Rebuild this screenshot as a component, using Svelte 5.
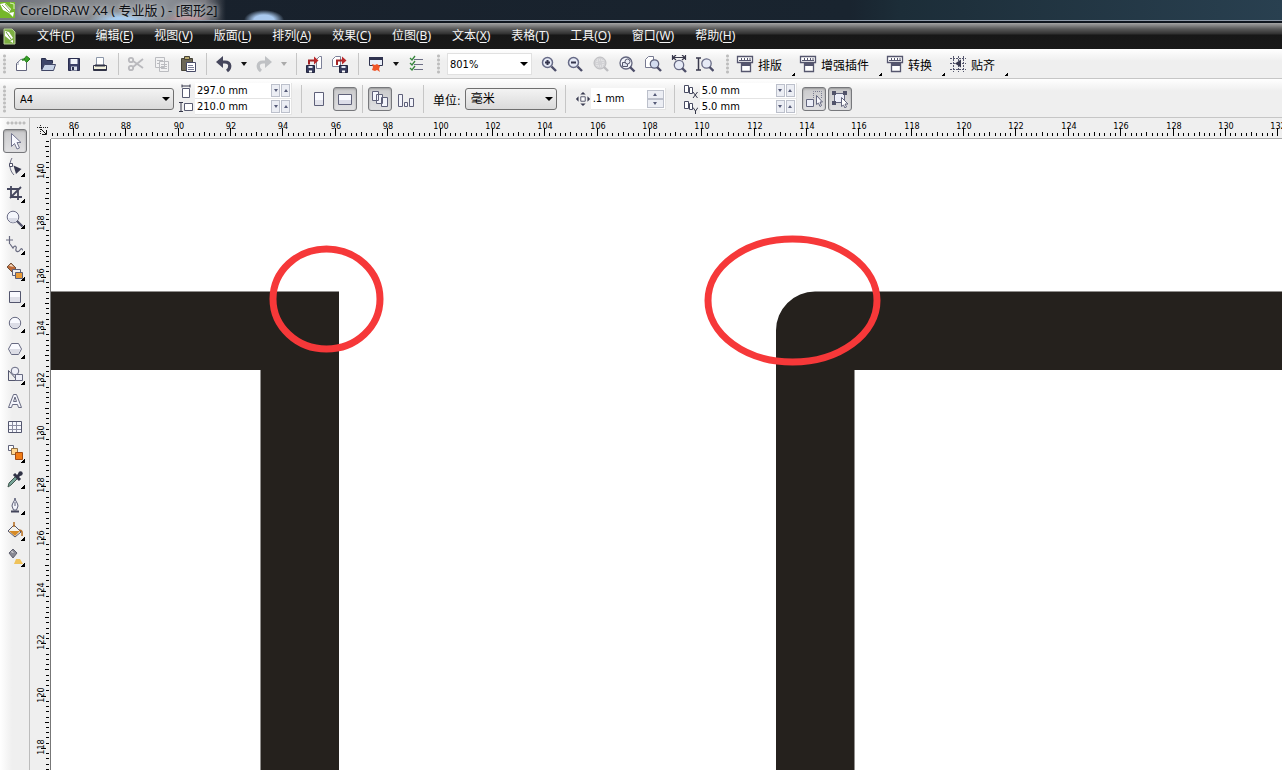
<script>
  let viewWidth = $state(1282);
  let viewHeight = $state(770);

  const menus = [
    ['文件', 'F'], ['编辑', 'E'], ['视图', 'V'], ['版面', 'L'], ['排列', 'A'], ['效果', 'C'],
    ['位图', 'B'], ['文本', 'X'], ['表格', 'T'], ['工具', 'O'], ['窗口', 'W'], ['帮助', 'H']
  ];

  const lens = '<circle cx="7.500" cy="7.500" r="5" fill="#e6eaf6" stroke="#666a86" stroke-width="1.500"/><path d="M11.500 11.500l4.500 4.500" stroke="#4d4e69" stroke-width="2.400"/>';
  const layoutIcon = '<path d="M1.500 1.500h15v6h-15z" fill="#fff" stroke="#55566e" stroke-width="1.300"/><path d="M5.500 3v3M8.500 3v3M11.500 3v3M14 3v3M3 5.500h12" stroke="#55566e"/><path d="M5.500 8.500h9v8h-9z" fill="#fff" stroke="#55566e" stroke-width="1.300"/><path d="M5 10h10" stroke="#55566e" stroke-width="2"/>';
  const disk = '<path d="M1.500 10.500h8v7h-8z" fill="#353a5c" stroke="#23263f"/><path d="M3.500 11h4v2h-4z" fill="#dfe4f2"/><path d="M4 15.500h3v2h-3z" fill="#fff"/>';

  const icons = {
    new: '<path d="M3.500 8.500l4-4h6v11h-10z" fill="#fff" stroke="#62647d"/><path d="M5 10c0-4 2-6 6-6" fill="none" stroke="#9aa2b4"/><path d="M9 5l4-1" stroke="#3a8f2c" stroke-width="2"/><path d="M13.500 1l3.500 3-3.500 3.500L11 4z" fill="#35a126" stroke="#277d1c"/>',
    open: '<path d="M2.500 14.500v-11h4l1 2h6v3" fill="#3d4569" stroke="#292e4c"/><path d="M2.500 15.500l3-6h11l-2 6z" fill="#c7d2e6" stroke="#414766"/>',
    save: '<path d="M3.500 3.500h11v12h-11z" fill="#3c4168" stroke="#2a2e4f"/><path d="M5.500 4h7v5h-7z" fill="#f2f5fb"/><path d="M6 11.500h6v4H6z" fill="#d8deea"/><path d="M7 12h2v3H7z" fill="#2a2e4f"/>',
    print: '<path d="M5.500 2.500h7v8h-7z" fill="#fff" stroke="#8c97a9"/><path d="M2.500 10.500h13v5h-13z" fill="#f2f1dc" stroke="#303247"/><path d="M4 10.500h10M3 15h12" stroke="#303247" stroke-width="2"/>',
    cut: '<g fill="none" stroke="#b9b9bd" stroke-width="1.800"><circle cx="4" cy="5" r="2.200"/><circle cx="4" cy="13" r="2.200"/><path d="M6 6l10 7M6 12l10-8"/></g>',
    copy: '<path d="M2.500 2.500h9v10h-9zM6.500 6.500h9v10h-9z" fill="#f2f2f3" stroke="#bbbcc0"/><path d="M4 5.500h6M4 8.500h2M8 9.500h6M8 11.500h6M8 13.500h6" stroke="#bbbcc0"/>',
    paste: '<path d="M2.500 3.500h11v12h-11z" fill="#6c6756" stroke="#464338"/><path d="M5.500 1.500h5v3h-5z" fill="#b6a76d" stroke="#464338"/><path d="M7.500 7.500h9v9h-9z" fill="#fff" stroke="#474a67"/><path d="M9 10.500h5M9 12.500h6M9 14.500h6" stroke="#7a7d98"/>',
    undo: '<path d="M6 7h4c6 0 6 6 2 9" fill="none" stroke="#45465c" stroke-width="3.200"/><path d="M1 7l7-6v12z" fill="#45465c"/>',
    redo: '<path d="M12 7H8c-6 0-6 6-2 9" fill="none" stroke="#bfc1c4" stroke-width="3.200"/><path d="M17 7l-7-6v12z" fill="#bfc1c4"/>',
    import: '<path d="M11.500 13.500v-9l3-3h2v12h-5z" fill="#fff" stroke="#7d8199"/><path d="M4 9.500V5.500h6" fill="none" stroke="#a42426" stroke-width="2"/><path d="M9 1.500l4.500 4-4.500 4z" fill="#b9292b"/>' + disk,
    export: '<path d="M1.500 11.500v-7l3-3h5v10z" fill="#fff" stroke="#7d8199"/><path d="M6 10V5.500h5" fill="none" stroke="#a42426" stroke-width="2"/><path d="M11 1.500l4.500 4-4.500 4z" fill="#b9292b"/><g transform="translate(7 0)">' + disk + '</g>',
    launch: '<path d="M2.500 2.500h13v8h-13z" fill="#e8edf7" stroke="#30334f"/><path d="M2 3.500h14" stroke="#30334f" stroke-width="3"/><path d="M5 9l3 1 2-1 3 2-1 3 1 3-3-2-2 1-3-1 1-3z" fill="#ef5529"/>',
    options: '<path d="M3 3l2 2 3-4M3 8l2 2 3-4M3 13l2 2 3-4" fill="none" stroke="#35863b" stroke-width="1.300"/><path d="M7 4.500h9M7 9.500h9M7 14.500h9" stroke="#6b6d84"/>',
    zoomin: lens + '<path d="M5 7.500h5M7.500 5v5" stroke="#34354d" stroke-width="2"/>',
    zoomout: lens + '<path d="M5 7.500h5" stroke="#34354d" stroke-width="2"/>',
    zoomsel: '<circle cx="8" cy="8" r="6" fill="#d2d2d5" stroke="#bdbdc0"/><path d="M12 12l4 4" stroke="#bdbdc0" stroke-width="2.400"/><path d="M5 5h6v6H5z" fill="none" stroke="#eee" stroke-dasharray="1 1"/>',
    zoomall: '<circle cx="8" cy="8" r="6" fill="#f4f6fc" stroke="#62657e" stroke-width="1.300"/><path d="M12 12l4.500 4.500" stroke="#4d4e69" stroke-width="2.400"/><path d="M4.500 7.500h5v4h-5z" fill="#dfe4f0" stroke="#56586f"/><circle cx="9.500" cy="6.500" r="2.500" fill="#e9ecf5" stroke="#56586f"/>',
    zoompage: '<path d="M1.500 12.500v-8l3-3h5v11z" fill="#fff" stroke="#777a91"/><circle cx="10.500" cy="9" r="4.200" fill="#d3dcef" stroke="#5e617b" stroke-width="1.300"/><path d="M13 12l4 4" stroke="#4d4e69" stroke-width="2.400"/>',
    zoomwidth: '<path d="M2.500 0v5M15.500 0v5M3 2.500h12M6 0L3 2.500 6 5M12 0l3 2.500L12 5" fill="none" stroke="#39394c" stroke-width="1.200"/><circle cx="9" cy="10" r="4.700" fill="#e6eaf6" stroke="#686b85" stroke-width="1.300"/><path d="M12 13l4 4" stroke="#4d4e69" stroke-width="2.400"/>',
    zoomheight: '<path d="M0 3h5M0 15h5M2.500 3v12" fill="none" stroke="#39394c" stroke-width="1.500"/><circle cx="10.500" cy="8.500" r="4.700" fill="#e6eaf6" stroke="#686b85" stroke-width="1.300"/><path d="M13.500 12l4 4" stroke="#4d4e69" stroke-width="2.400"/>',
    layout: layoutIcon,
    snap: '<path d="M4.500 1v16M9.500 1v16M14.500 1v16M1 3.500h16M1 8.500h16M1 14.500h16" stroke="#55576e" stroke-dasharray="2 1"/><path d="M6 8.500l6-4v8z" fill="#36374d"/>',
    portrait: '<path d="M4.500 2.500h9v13h-9z" fill="#f9faff" stroke="#5e6079"/><path d="M5 10h8v5H5z" fill="#e4e5ed"/>',
    landscape: '<path d="M2.500 4.500h13v10h-13z" fill="#f9faff" stroke="#5e6079"/><path d="M3 10h12v4H3z" fill="#dcdde8"/>',
    pages: '<path d="M1.500 1.500h6v9h-6zM5.500 4.500h6v9h-6zM10.500 7.500h6v9h-6z" fill="#f3f4fb" stroke="#5e6079"/>',
    pagesizes: '<path d="M1.500 4.500h4v12h-4zM7.500 12.500h3v4h-3zM12.500 8.500h4v8h-4z" fill="#f3f4fb" stroke="#5e6079"/>',
    nudge: '<path d="M6.500 6.500h5v5h-5z" fill="#fff" stroke="#47495f"/><path d="M9 1l3 3H6zM9 17l3-3H6zM1 9l3-3v6zM17 9l-3-3v6z" fill="#393b50"/>',
    treat: '<path d="M1.500 9.500h7v7h-7z" fill="#eceef8" stroke="#62657d"/><path d="M8.500 8V1.500h8V9" fill="none" stroke="#77798e" stroke-dasharray="1 1"/><path d="M11.500 5.500v9l2-1.500 1.500 3.500 1.500-1-1.500-3.500h2.500z" fill="#f8f8fc" stroke="#62657d"/>',
    treatfill: '<path d="M3.500 3.500h10v9h-10z" fill="#eceef8" stroke="#62657d"/><path d="M1 1h4v4H1zM12 1h4v4h-4zM1 11h4v4H1z" fill="#51536a"/><path d="M10.500 7.500v9l2-1.500 1.500 3 1.500-1-1.500-3h3z" fill="#fff" stroke="#62657d"/>'
  };

  const toolIcons = [
    ['挑选', '<path d="M5.500 1.500v13l3-3 2.500 5.500 2.500-1-2.500-5.500h4z" fill="#f8f9ff" stroke="#73758f"/>'],
    ['形状', '<path d="M6 0C3 5 3 12 8 17" fill="none" stroke="#696b80"/><path d="M3.500 5.500h3v3h-3z" fill="#fff" stroke="#4f5168"/><path d="M7.500 7.500l8 3.500-5.500 5z" fill="#35374e"/>'],
    ['裁剪', '<path d="M5 2v11h11M1 5h11v11M4 14l11-11" fill="none" stroke="#45475e" stroke-width="1.800"/>'],
    ['缩放', '<circle cx="7" cy="7" r="5.800" fill="#f4f6fc" stroke="#6b6d86"/><path d="M2.500 8h9a4.500 4.500 0 0 1-9 0" fill="#d9dbe6"/><path d="M11 11l5.500 5.500" stroke="#51536b" stroke-width="2.400"/>'],
    ['手绘', '<path d="M3.500 0v8M0 4h7M4 8l3 4c2-4 4-1 3 1s2 4 4 1 2 0 3 0" fill="none" stroke="#696b80" stroke-width="1.200"/>'],
    ['智能填充', '<path d="M1 5l4-4 5 5-4 4z" fill="#bc6938" stroke="#70533f"/><path d="M3 4l2-2 3 3z" fill="#f1ddc7"/><path d="M6.500 7.500h8v6h-8z" fill="#eee" stroke="#5d5f77"/><path d="M9.500 10.500h7v6h-7z" fill="#e99b36" stroke="#5d5f77"/>'],
    ['矩形', '<path d="M3.500 3.500h11v11h-11z" fill="#f9faff" stroke="#53566e"/><path d="M4 9h10v5H4z" fill="#dedfe8"/>'],
    ['椭圆形', '<circle cx="9" cy="9" r="5.700" fill="#f9faff" stroke="#666981"/><path d="M4 9h10a5 5 0 0 1-10 0" fill="#dcdde6"/>'],
    ['多边形', '<path d="M5.500 3.500h7l3 5.500-3 5.500h-7l-3-5.500z" fill="#f9faff" stroke="#666981"/><path d="M3.500 9h11l-2.500 5H6z" fill="#dcdde6"/>'],
    ['基本形状', '<path d="M2.500 4.500l9 10h-9z" fill="#eee" stroke="#53566e"/><path d="M9.500 8.500h7v6h-7z" fill="#eff0f8" stroke="#666981"/><circle cx="9" cy="5" r="3.800" fill="#eff0f8" stroke="#666981"/>'],
    ['文本', '<path d="M2.500 15.500h3l1-3h5l1 3h3l-5-13h-3zM7.500 9.500L9 5l1.500 4.500z" fill="#f5f6fc" stroke="#686b82"/>'],
    ['表格', '<path d="M2.500 3.500h13v11h-13z" fill="#f7f8fd" stroke="#53566e"/><path d="M6.500 4v10M10.500 4v10M3 7.500h12M3 11.500h12" stroke="#8b8da1"/>'],
    ['调和', '<path d="M2.500 1.500h5v5h-5z" fill="#fff" stroke="#60637a"/><path d="M5.500 4.500h6v6h-6z" fill="#ffd791" stroke="#927044"/><path d="M9.500 8.500h7v7h-7z" fill="#f27d16" stroke="#a24a13"/>'],
    ['滴管', '<path d="M2 17l1-4 7-7 2 2-7 7z" fill="#75a397" stroke="#41584f"/><path d="M8 4l6 6M11 7l4-4" stroke="#303245" stroke-width="3"/><circle cx="14.500" cy="3.500" r="2.200" fill="#303245"/>'],
    ['轮廓', '<path d="M9 2c0 3-3 5-3 8l1.500 4h3l1.500-4c0-3-3-5-3-8z" fill="#f4f5fb" stroke="#5b5e77"/><path d="M9 6v4" stroke="#5b5e77"/><path d="M5 15.500h8" stroke="#414359" stroke-width="2"/>'],
    ['填充', '<path d="M2 9l6-6 7 7-6 5z" fill="#f5f3ec" stroke="#55566c"/><path d="M3 9h11l-5 5z" fill="#d68b27"/><path d="M8 5V0M13 8c4 0 3 3 3 6" fill="none" stroke="#b56c1e" stroke-width="1.500"/>'],
    ['交互式填充', '<path d="M3 5l4-4 4 4-4 5z" fill="#888993" stroke="#606170"/><path d="M5 4l1-1 2 2z" fill="#fff"/><path d="M8 16l2-5h4l3 5z" fill="#efc25a"/>']
  ];

  const perUnit = 26.18;
  const range = (n) => Array.from({ length: Math.max(0, n) }, (_, i) => i);
  const hTicks = $derived(range(Math.ceil(((viewWidth - 69) * 5) / perUnit) + 5).map((i) => i - 4));
  const vTicks = $derived(range(Math.ceil(((viewHeight - 166) * 5) / perUnit) + 6).map((i) => i - 6));
  const hLabels = $derived(range(Math.floor((viewWidth - 74) / perUnit / 2) + 1).map((i) => 86 + i * 2));
  const vLabels = $derived(range(Math.floor((viewHeight - 180) / perUnit / 2) + 1).map((i) => 140 - i * 2));
  const mod = (n, m) => ((n % m) + m) % m;
  const tick = (i) => (mod(i, 10) === 0 ? 8 : mod(i, 5) === 0 ? 4 : 3);
</script>

<svelte:window bind:innerWidth={viewWidth} bind:innerHeight={viewHeight} />

{#snippet icon(name)}
  <svg class="icon" viewBox="0 0 18 18" aria-hidden="true">{@html icons[name]}</svg>
{/snippet}

{#snippet tool(name, label, pressed = false)}
  <button class="tool" class:pressed aria-label={label}>{@render icon(name)}</button>
{/snippet}

{#snippet drop(label, dim = false)}
  <button class="drop" class:dim aria-label={label}></button>
{/snippet}

{#snippet plugin(name, label)}
  <button class="plugin">{@render icon(name)}<span>{label}</span></button>
{/snippet}

{#snippet spinField(label, value)}
  <div class="field">
    <input type="text" aria-label={label} {value} />
    <button class="spin" aria-label="{label} 减"><i class="down"></i></button>
    <button class="spin" aria-label="{label} 加"><i class="up"></i></button>
  </div>
{/snippet}

<div class="app">
  <header class="title">
    <svg class="logo" viewBox="0 0 16 20" aria-hidden="true">
      <path d="M0 2h15v16H0z" fill="#76b72a" /><path d="M0 4l5-1 6 6-2 4-6-3z" fill="#fff" /><path d="M2 5l7 7M5 4l6 7" stroke="#8aad62" /><path d="M9 13l5-1-1 5z" fill="#fff" /><path d="M10 3l4 1v5" fill="none" stroke="#d9f1b7" />
    </svg>
    <h1>CorelDRAW X4 ( 专业版 ) - [图形2]</h1>
  </header>

  <nav class="menu">
    <svg class="doc" viewBox="0 0 13 17" aria-hidden="true">
      <path d="M1 1h8l3 3v12H1z" fill="#7daf42" stroke="#b9cf9c" /><path d="M2 3l4 1 4 6-3 2-5-4z" fill="#fff" /><path d="M3 4l5 7" stroke="#6a9c36" /><path d="M7 13l3-1v3z" fill="#fff" />
    </svg>
    {#each menus as [name, key]}
      <button>{name}(<u>{key}</u>)</button>
    {/each}
  </nav>

  <div class="bar standard">
    <span class="grip first"></span>
    {@render tool('new', '新建')}{@render tool('open', '打开')}{@render tool('save', '保存')}{@render tool('print', '打印')}
    <span class="sep"></span>
    {@render tool('cut', '剪切')}{@render tool('copy', '复制')}{@render tool('paste', '粘贴')}
    <span class="sep"></span>
    {@render tool('undo', '撤消')}{@render drop('撤消列表')}{@render tool('redo', '重做')}{@render drop('重做列表', true)}
    <span class="sep"></span>
    {@render tool('import', '导入')}{@render tool('export', '导出')}
    <span class="sep"></span>
    {@render tool('launch', '应用程序启动器')}{@render drop('应用程序列表')}{@render tool('options', '选项')}
    <span class="grip"></span>
    <select class="zoom" aria-label="缩放级别"><option>801%</option></select>
    {@render tool('zoomin', '放大')}{@render tool('zoomout', '缩小')}{@render tool('zoomsel', '缩放选定范围')}{@render tool('zoomall', '缩放全部对象')}{@render tool('zoompage', '显示页面')}{@render tool('zoomwidth', '按页宽显示')}{@render tool('zoomheight', '按页高显示')}
    <span class="grip"></span>
    {@render plugin('layout', '排版')}{@render plugin('layout', '增强插件')}{@render plugin('layout', '转换')}{@render plugin('snap', '贴齐')}
  </div>

  <div class="bar property">
    <span class="grip first"></span>
    <select class="paper" aria-label="纸张类型"><option>A4</option></select>
    <div class="pair">
      <div class="row">
        <svg class="mini" viewBox="0 0 14 14" aria-hidden="true"><path d="M3.500 4.500h7v9h-7z" fill="#fff" stroke="#575a70" /><path d="M3 .500v3M11 .500v3M3 2h8" stroke="#35374b" /></svg>
        {@render spinField('宽度', '297.0 mm')}
      </div>
      <div class="row">
        <svg class="mini" viewBox="0 0 14 14" aria-hidden="true"><path d="M5.500 3.500h8v7h-8z" fill="#fff" stroke="#575a70" /><path d="M0 2.500h4M0 11.500h4M2 3v8" stroke="#35374b" /></svg>
        {@render spinField('高度', '210.0 mm')}
      </div>
    </div>
    <span class="sep page"></span>
    {@render tool('portrait', '纵向')}{@render tool('landscape', '横向', true)}
    <span class="sep"></span>
    {@render tool('pages', '全部页面', true)}{@render tool('pagesizes', '当前页面')}
    <span class="sep"></span>
    <label class="unit-label" for="unit">单位:</label>
    <select class="unit" id="unit"><option>毫米</option></select>
    <span class="sep wide"></span>
    <label class="nudge" for="nudge" aria-label="微调偏移">{@render icon('nudge')}</label>
    <div class="field offset">
      <input type="text" id="nudge" value=".1 mm" />
      <span class="stack">
        <button class="spin" aria-label="增加"><i class="up"></i></button>
        <button class="spin" aria-label="减少"><i class="down"></i></button>
      </span>
    </div>
    <span class="sep wide"></span>
    <div class="pair copies">
      {#each ['X', 'Y'] as axis}
        <div class="row">
          <svg class="mini" viewBox="0 0 14 14" aria-hidden="true"><path d="M.500 1.500h4v7h-4zM5.500 3.500h3v6h-3z" fill="#fff" stroke="#484b62" />{#if axis === 'X'}<path d="M9 8l4.500 6M13.500 8L9 14" stroke="#333548" />{:else}<path d="M9 7.500l2.500 3.500L14 7.500M11.500 11v3" fill="none" stroke="#333548" />{/if}</svg>
          {@render spinField('再制距离 ' + axis, '5.0 mm')}
        </div>
      {/each}
    </div>
    {@render tool('treat', '视为已填充', true)}{@render tool('treatfill', '贴齐对象', true)}
  </div>

  <main>
    <aside>
      <span class="handle"></span>
      {#each toolIcons as [label, art], i}
        <button class="tool" class:pressed={i === 0} class:flyout={i > 0 && i !== 10 && i !== 11} aria-label={label}>
          <svg class="icon" viewBox="0 0 18 18" aria-hidden="true">{@html art}</svg>
        </button>
      {/each}
    </aside>
    <section class="work">
      <svg class="origin" viewBox="0 0 21 21" aria-hidden="true">
        <path d="M10.500 7v10M7 9.500h11" stroke="#222" stroke-dasharray="1 1" /><path d="M11 11l5 5M16.500 12v4.500H12" fill="none" stroke="#111" />
      </svg>
      <svg class="hruler" aria-hidden="true">
        {#each hTicks as i}
          {@const x = Math.round(22 + (i * perUnit) / 5)}
          <rect {x} y={18 - tick(i)} width="1" height={tick(i)} />
        {/each}
        {#each hLabels as n, i}
          <text x={Math.round(23 + i * 2 * perUnit)} y="11">{n}</text>
        {/each}
      </svg>
      <svg class="vruler" aria-hidden="true">
        {#each vTicks as i}
          {@const y = Math.round(33 + (i * perUnit) / 5)}
          <rect x={19 - tick(i)} {y} width={tick(i) > 4 ? 5 : tick(i)} height="1" />
        {/each}
        {#each vLabels as n, i}
          <text transform="translate(14 {Math.round(32 + i * 2 * perUnit)}) rotate(-90)">{n}</text>
        {/each}
      </svg>
      <div class="canvas">
        <svg role="img" aria-label="直角与圆角轮廓对比">
          <path d="M-10 152.500H288V4000H209.500V231H-10z" fill="#25211d" />
          <path d="M5000 152.500H764a39 39 0 0 0-39 39V4000h78.500V231H5000z" fill="#25211d" />
          <ellipse cx="275.500" cy="160" rx="53.500" ry="50" fill="none" stroke="#f63839" stroke-width="7" />
          <ellipse cx="741.500" cy="161.500" rx="84.500" ry="61.500" fill="none" stroke="#f63839" stroke-width="7" />
        </svg>
      </div>
    </section>
  </main>
</div>

<style>
  :global(body) { margin: 0; }
  .app, .app button, .app input, .app select {
    font-family: "DejaVu Sans Condensed", "Noto Sans CJK SC", sans-serif;
    font-size: 11px;
    color: #000;
  }
  .app { min-height: 100vh; display: flex; flex-direction: column; background: #efefef; overflow: hidden; }
  .app * { box-sizing: border-box; }
  button { border: 0; padding: 0; margin: 0; background: none; }
  svg { display: block; flex: none; }

  .title {
    height: 23px;
    display: flex;
    align-items: flex-start;
    border-bottom: 2px solid #10161e;
    box-shadow: inset 0 -1px #8d98a6;
    background:
      radial-gradient(ellipse 20px 10px at 264px 20px, #a9c9ee 50%, transparent 100%),
      radial-gradient(ellipse 34px 9px at 122px 20px, #a6cdf2 30%, transparent 100%),
      radial-gradient(ellipse 24px 8px at 188px 20px, #b88f94 30%, transparent 100%),
      linear-gradient(90deg, #75797d 0, #85888c 100px, #8a8f96 165px, #77777d 205px, transparent 226px),
      linear-gradient(90deg, #18202b 0, #19242f 850px, #1c2d38 900px, #294050 1282px);
  }
  .logo { width: 16px; height: 20px; }
  h1 {
    margin: 0 0 0 4px;
    font: 13px/21px "Noto Sans", "Noto Sans CJK SC", sans-serif;
    color: #0d1014;
    text-shadow: 0 0 6px #d5d8dc, 0 0 4px #b5b8bc;
    white-space: nowrap;
  }
  .menu {
    height: 26px;
    display: flex;
    align-items: center;
    gap: 21px;
    padding-left: 3px;
    background: linear-gradient(#a5a5a5 0, #585858 6px, #303030 11px, #171717 12px, #191919 100%);
  }
  .doc { width: 13px; height: 17px; }
  .menu button { font: 12px/20px "Noto Sans", "Noto Sans CJK SC", sans-serif; color: #f5f5f5; white-space: nowrap; }
  .menu u { text-underline-offset: 2px; }

  .bar { display: flex; align-items: center; border-bottom: 1px solid #c6c6c6; background: linear-gradient(#fff, #efefef 12px); }
  .standard { height: 30px; padding-top: 1px; }
  .property { height: 39px; padding-top: 2px; }
  .grip { width: 18px; height: 20px; flex: none; background: radial-gradient(circle at 50% 2px, #bdbdbd 1px, transparent 2px) center top / 3px 4px no-repeat repeat; }
  .grip.first { width: 9px; }
  .property .grip { height: 28px; margin-right: 5px; }
  .sep { width: 10px; height: 22px; flex: none; background: linear-gradient(#c6c6c6, #c6c6c6) center / 1px 100% no-repeat; }
  .property .sep { width: 9px; height: 28px; }
  .property .sep.page { width: 14px; background-position: 9px 0; }
  .property .sep.wide { width: 18px; }
  .tool { width: 26px; height: 26px; flex: none; display: grid; place-items: center; position: relative; }
  .icon { width: 18px; height: 18px; }
  .tool.pressed::before { content: ""; position: absolute; inset: 1px; border: 1px solid #77787c; border-radius: 3px; background: linear-gradient(#c9c9cb, #e1e1e3); box-shadow: inset 0 1px 2px #999; }
  .tool.pressed .icon { position: relative; }
  .drop { width: 14px; height: 20px; display: grid; place-items: center; }
  .drop::before { content: ""; border: 3px solid transparent; border-top: 4px solid #111; border-bottom: 0; }
  .drop.dim::before { border-top-color: #aaa; }

  select {
    appearance: none;
    flex: none;
    height: 22px;
    border: 1px solid #6f6f6f;
    border-radius: 3px;
    padding: 0 20px 0 5px;
    background-image: url("data:image/svg+xml,%3Csvg xmlns='http://www.w3.org/2000/svg' width='8' height='4'%3E%3Cpath d='M0 0h8L4 4z'/%3E%3C/svg%3E"), linear-gradient(#f3f3f3, #dadada);
    background-position: right 3px center, 0 0;
    background-size: 8px 4px, 100% 100%;
    background-repeat: no-repeat;
  }
  select.zoom {
    width: 85px;
    margin-right: 4px;
    border: 1px solid #e1e1e1;
    border-radius: 0;
    padding-left: 2px;
    background-image: url("data:image/svg+xml,%3Csvg xmlns='http://www.w3.org/2000/svg' width='8' height='4'%3E%3Cpath d='M0 0h8L4 4z'/%3E%3C/svg%3E"), linear-gradient(#fff, #fff);
  }
  select.paper { width: 160px; margin-right: 5px; }
  select.unit { width: 92px; font-size: 12px; }
  .plugin {
    display: flex;
    align-items: center;
    gap: 4px;
    height: 26px;
    padding: 0 13px 0 0;
    margin-right: 4px;
    background: linear-gradient(to bottom right, transparent 50%, #000 51%) right 0 bottom 1px / 4px 4px no-repeat;
    white-space: nowrap;
  }
  .plugin span { font-size: 12px; }

  .pair { display: flex; flex-direction: column; flex: none; }
  .pair.copies { margin-right: 4px; }
  .row { display: flex; align-items: center; gap: 2px; }
  .mini { width: 14px; height: 14px; }
  .field { display: flex; align-items: center; gap: 1px; width: 97px; height: 16px; padding-right: 1px; background: #fff; border: 1px solid #e4e4e4; border-width: 0 1px 1px 0; }
  .field input { flex: 1; min-width: 0; height: 14px; padding: 0 0 0 2px; border: 0; background: none; }
  .spin { width: 9px; height: 13px; flex: none; display: grid; place-items: center; border: 1px solid #bcc0cb; background: #eceef4; }
  .spin i { border: 2px solid transparent; }
  .spin .down { border-top: 3px solid #565b78; border-bottom: 0; }
  .spin .up { border-bottom: 3px solid #565b78; border-top: 0; }
  .field.offset { width: 75px; height: 22px; }
  .stack { display: flex; flex-direction: column; }
  .stack .spin { width: 17px; height: 9px; }
  .unit-label { margin: 0 4px 0 5px; font-size: 12px; white-space: nowrap; }
  .nudge { display: block; width: 16px; }
  .nudge .icon { width: 16px; height: 16px; }

  main { flex: 1; display: flex; }
  aside { width: 30px; flex: none; padding-left: 2px; border-right: 1px solid #bcbcbc; background: linear-gradient(90deg, #fff, #efefef 12px); }
  .handle { display: block; width: 20px; height: 4px; margin: 3px 0 3px 4px; background: radial-gradient(circle, #bdbdbd 1px, transparent 2px) 0 0 / 4px 4px; }
  .flyout::after { content: ""; position: absolute; right: 3px; bottom: 3px; width: 5px; height: 5px; background: linear-gradient(to bottom right, transparent 50%, #000 51%); }
  .work { flex: 1; min-width: 0; display: grid; grid-template: 21px 1fr / 21px 1fr; background: #efefef; }
  .origin { width: 21px; height: 21px; }
  .hruler { width: 100%; height: 21px; border-bottom: 1px solid #a9a9a9; }
  .vruler { width: 21px; height: 100%; border-right: 1px solid #777; }
  .work text { font-size: 9px; text-anchor: middle; }
  .canvas { position: relative; background: #fff; overflow: hidden; }
  .canvas svg { position: absolute; inset: 0; width: 100%; height: 100%; }
</style>
